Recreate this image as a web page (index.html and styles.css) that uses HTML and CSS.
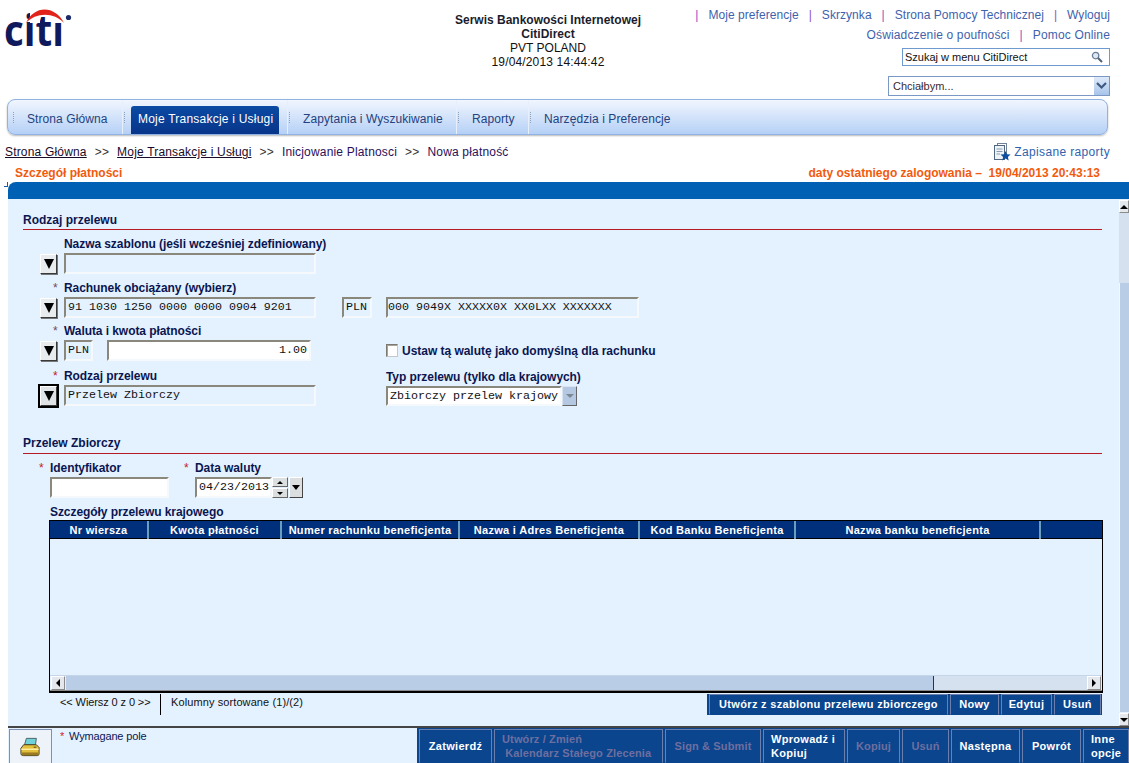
FILE: index.html
```html
<!DOCTYPE html>
<html lang="pl">
<head>
<meta charset="utf-8">
<title>CitiDirect</title>
<link rel="stylesheet" href="styles.css">
</head>
<body>
<header class="top">
  <div class="logo">
    <svg width="72" height="62" viewBox="0 0 72 62" role="img" aria-label="citi">
      <text class="logo-text" x="3" y="46" textLength="60" lengthAdjust="spacingAndGlyphs">citi</text>
      <rect x="29" y="6" width="10" height="17" fill="#fff"/>
      <rect x="53" y="6" width="11" height="17" fill="#fff"/>
      <path d="M25 23 C33 5 54 5 63 23 C53 12 35 12 25 23 Z" fill="#e2231a"/>
      <circle cx="67.5" cy="17.5" r="2.6" fill="#1b2a6b"/>
    </svg>
  </div>
  <div class="title-block">
    <div class="strong">Serwis Bankowości Internetowej</div>
    <div class="strong">CitiDirect</div>
    <div>PVT POLAND</div>
    <div class="stamp">19/04/2013 14:44:42</div>
  </div>
  <div class="utility">
    <div class="links links-first">
      <span class="sep">|</span><a>Moje preferencje</a><span class="sep">|</span><a>Skrzynka</a><span class="sep">|</span><a>Strona Pomocy Technicznej</a><span class="sep">|</span><a>Wyloguj</a>
    </div>
    <div class="links links-second">
      <a>Oświadczenie o poufności</a><span class="sep">|</span><a>Pomoc Online</a>
    </div>
    <div class="search">
      <span>Szukaj w menu CitiDirect</span>
      <svg width="12" height="12" viewBox="0 0 12 12"><circle cx="4.6" cy="4.6" r="3.2" fill="#dfe8f2" stroke="#6b7f96" stroke-width="1.3"/><path d="M7 7 L11 11" stroke="#4f6074" stroke-width="2"/></svg>
    </div>
    <div class="want">
      <span>Chciałbym...</span>
      <span class="want-btn"><svg width="11" height="8" viewBox="0 0 11 8"><path d="M1 1 L5.5 5.5 L10 1" fill="none" stroke="#3f5a80" stroke-width="2.2"/></svg></span>
    </div>
  </div>
</header>

<nav class="nav">
  <div class="nav-item nav-first"><span class="nav-label">Strona Główna</span></div>
  <div class="nav-item nav-current"><span class="nav-label">Moje Transakcje i Usługi</span></div>
  <div class="nav-item"><span class="nav-label">Zapytania i Wyszukiwanie</span></div>
  <div class="nav-item"><span class="nav-label">Raporty</span></div>
  <div class="nav-item nav-last"><span class="nav-label">Narzędzia i Preferencje</span></div>
</nav>

<div class="crumbs">
  <div class="crumb-list">
    <a>Strona Główna</a><span class="gt">&gt;&gt;</span><a>Moje Transakcje i Usługi</a><span class="gt">&gt;&gt;</span><span class="plain">Inicjowanie Platnosci</span><span class="gt">&gt;&gt;</span><span class="plain">Nowa płatność</span>
  </div>
  <div class="saved">
    <svg width="17" height="18" viewBox="0 0 17 18"><rect x="3.5" y="0.5" width="9" height="12" fill="#fff" stroke="#6f8296"/><rect x="0.5" y="2.5" width="10" height="14" fill="#eef3f8" stroke="#52677f"/><path d="M2.5 6H8.5M2.5 8.5H8.5M2.5 11H6" stroke="#8a9bb0"/><path d="M11.5 8 L13 11.2 L16.5 11.6 L13.9 13.9 L14.7 17.4 L11.5 15.6 L8.3 17.4 L9.1 13.9 L6.5 11.6 L10 11.2 Z" fill="#0d4f9e"/></svg>
    <span>Zapisane raporty</span>
  </div>
</div>

<div class="page-title">
  <span>Szczegół płatności</span>
  <span class="last-login">daty ostatniego zalogowania –&nbsp; 19/04/2013 20:43:13</span>
</div>

<div class="blue-bar"></div>

<main class="main">
  <div class="content">
    <h2 class="section section-first">Rodzaj przelewu</h2>

    <div class="row row-a">
      <button class="drop"><i class="tri-down"></i></button>
      <div class="field">
        <div class="label">Nazwa szablonu (jeśli wcześniej zdefiniowany)</div>
        <div class="box w252"></div>
      </div>
    </div>

    <div class="row">
      <button class="drop"><i class="tri-down"></i></button>
      <div class="field">
        <div class="label req-grey">Rachunek obciążany (wybierz)</div>
        <div class="box w252">91 1030 1250 0000 0000 0904 9201</div>
      </div>
      <div class="box w30 gap26">PLN</div>
      <div class="box w253 gap14 tight">000 9049X XXXXX0X XX0LXX XXXXXXX</div>
    </div>

    <div class="row row-tight">
      <button class="drop"><i class="tri-down"></i></button>
      <div class="field">
        <div class="label req-grey">Waluta i kwota płatności</div>
        <div class="amount-line">
          <div class="box w28">PLN</div>
          <div class="box box-white w204 num">1.00</div>
        </div>
      </div>
      <label class="check"><span class="check-box"></span>Ustaw tą walutę jako domyślną dla rachunku</label>
    </div>

    <div class="row row-loose">
      <button class="drop drop-focus"><i class="tri-down"></i></button>
      <div class="field">
        <div class="label req">Rodzaj przelewu</div>
        <div class="box w252">Przelew Zbiorczy</div>
      </div>
      <div class="field gap70">
        <div class="label">Typ przelewu (tylko dla krajowych)</div>
        <div class="select">
          <div class="select-value">Zbiorczy przelew krajowy</div>
          <span class="select-btn"><i class="tri-down tri-grey"></i></span>
        </div>
      </div>
    </div>

    <h2 class="section section-second">Przelew Zbiorczy</h2>

    <div class="row-b">
      <div class="field">
        <div class="label req">Identyfikator</div>
        <div class="box box-white w119"></div>
      </div>
      <div class="field gap26">
        <div class="label req">Data waluty</div>
        <div class="date">
          <div class="box box-white w77 date-value">04/23/2013</div>
          <div class="spin"><span><i class="tri-up tri-small"></i></span><span><i class="tri-down tri-small"></i></span></div>
          <button class="date-drop"><i class="tri-down"></i></button>
        </div>
      </div>
    </div>

    <div class="table-title">Szczegóły przelewu krajowego</div>
    <div class="table">
      <div class="thead">
        <div>Nr wiersza</div>
        <div>Kwota płatności</div>
        <div>Numer rachunku beneficjenta</div>
        <div>Nazwa i Adres Beneficjenta</div>
        <div>Kod Banku Beneficjenta</div>
        <div>Nazwa banku beneficjenta</div>
        <div></div>
      </div>
      <div class="tbody"></div>
      <div class="hscroll">
        <span class="sb-btn"><i class="tri-left"></i></span>
        <span class="hthumb"></span>
        <span class="htrack"></span>
        <span class="sb-btn"><i class="tri-right"></i></span>
      </div>
    </div>

    <div class="status">
      <div class="pager">&lt;&lt; Wiersz 0 z 0 &gt;&gt;</div>
      <div class="sorted">Kolumny sortowane (1)/(2)</div>
      <div class="table-actions">
        <button class="act act-create">Utwórz z szablonu przelewu zbiorczego</button>
        <button class="act act-new">Nowy</button>
        <button class="act act-edit">Edytuj</button>
        <button class="act act-del">Usuń</button>
      </div>
    </div>
  </div>

  <div class="vscroll">
    <span class="vbtn"><i class="tri-up"></i></span>
    <span class="vtrack"></span>
    <span class="vthumb"></span>
    <span class="vbtn"><i class="tri-down"></i></span>
  </div>
</main>

<footer class="footer">
  <div class="print">
    <svg width="20" height="20" viewBox="0 0 22 21">
      <path d="M7 1 L18 1 L17 8 L5 8 Z" fill="#6fd2d8" stroke="#4a5a5a"/>
      <path d="M4 8 L18 8 L21 11 L21 18 Q21 20 19 20 L4 20 Q1 20 1 18 L1 12 Z" fill="#e3bf3e" stroke="#3f3a20"/>
      <path d="M1.5 13 L20.5 13" stroke="#fff3a8" stroke-width="1.5"/>
      <path d="M2 18 L20 18" stroke="#9a7a20" stroke-width="3"/>
      <rect x="15" y="10" width="3" height="1.5" fill="#7a6520"/>
    </svg>
  </div>
  <div class="note">Wymagane pole</div>
  <div class="actions">
    <button class="fbtn">Zatwierdź</button>
    <button class="fbtn fbtn-off fbtn-left">Utwórz / Zmień<br>&nbsp;Kalendarz Stałego Zlecenia</button>
    <button class="fbtn fbtn-off">Sign &amp; Submit</button>
    <button class="fbtn fbtn-left">Wprowadź i<br>Kopiuj</button>
    <button class="fbtn fbtn-off">Kopiuj</button>
    <button class="fbtn fbtn-off">Usuń</button>
    <button class="fbtn">Następna</button>
    <button class="fbtn">Powrót</button>
    <button class="fbtn fbtn-left">Inne<br>opcje</button>
  </div>
</footer>
</body>
</html>
```
FILE: styles.css
```css
* { box-sizing: border-box; }
html, body { margin: 0; padding: 0; }
body {
  width: 1129px;
  height: 763px;
  overflow: hidden;
  background: #fff;
  font: 12px/14px "Liberation Sans", Arial, sans-serif;
  color: #111;
}
button { font-family: inherit; padding: 0; margin: 0; }
a { cursor: pointer; }

/* triangles */
i { display: block; width: 0; height: 0; }
.tri-down { border-left: 5px solid transparent; border-right: 5px solid transparent; border-top: 10px solid #000; }
.tri-grey { border-left-width: 4px; border-right-width: 4px; border-top: 4px solid #7c8794; }
.tri-up { border-left: 4px solid transparent; border-right: 4px solid transparent; border-bottom: 4px solid #000; }
.tri-left { border-top: 4px solid transparent; border-bottom: 4px solid transparent; border-right: 4px solid #000; }
.tri-right { border-top: 4px solid transparent; border-bottom: 4px solid transparent; border-left: 4px solid #000; }
.tri-small { border-left-width: 3px; border-right-width: 3px; }
.tri-small.tri-down { border-top-width: 3px; }
.tri-small.tri-up { border-bottom-width: 3px; }

/* header */
.top {
  height: 99px;
  display: grid;
  grid-template-columns: 345px 406px minmax(0, 1fr);
  padding-right: 19px;
}
.logo { padding: 0 0 0 1px; }
.logo svg { display: block; }
.logo-text { font: 700 43px "Open Sans", sans-serif; fill: #0f1a5c; }
.title-block { padding-top: 13px; text-align: center; color: #111; }
.strong { font-weight: 700; font-size: 12px; color: #1c1c2c; }
.stamp { letter-spacing: .15px; }
.utility { display: flex; flex-direction: column; align-items: flex-end; }
.links { display: flex; color: #3f62ad; white-space: nowrap; }
.links-first { margin-top: 8px; letter-spacing: .05px; }
.links-second { margin-top: 6px; letter-spacing: .15px; }
.sep { color: #8d52c4; margin: 0 10px; }
.search {
  margin-top: 6px;
  width: 208px;
  height: 18px;
  border: 1px solid #6f9ad0;
  display: flex;
  align-items: center;
  justify-content: space-between;
  padding: 0 6px 0 2px;
  font-size: 11px;
  white-space: nowrap;
}
.want {
  margin-top: 10px;
  width: 222px;
  height: 20px;
  border: 1px solid #7b98c4;
  display: flex;
  align-items: center;
  justify-content: space-between;
  padding-left: 4px;
  font-size: 11px;
  color: #3b2a30;
}
.want-btn {
  width: 15px;
  height: 18px;
  background: linear-gradient(#dfeafa, #a8c4ea);
  display: flex;
  align-items: center;
  justify-content: center;
}

/* nav */
.nav {
  margin: 0 21px 0 7px;
  height: 36px;
  display: flex;
  border: 1px solid #8fb3e2;
  border-radius: 8px;
  background: linear-gradient(#f1f6fe, #b5d0f6);
  box-shadow: 0 1px 2px #b9b9b9;
  overflow: hidden;
  color: #24427f;
}
.nav-item {
  display: flex;
  align-items: flex-end;
  padding: 0 16px 0 15px;
  border-right: 1px solid #e6effb;
  position: relative;
  white-space: nowrap;
}
.nav-item::before {
  content: "";
  position: absolute;
  left: 1px;
  top: 12px;
  height: 11px;
  border-left: 1px dotted #8ba3bf;
}
.nav-label { display: block; height: 28px; line-height: 27px; letter-spacing: .08px; }
.nav-first { width: 115px; padding-left: 19px; }
.nav-first::before { left: 5px; }
.nav-current { width: 165px; padding: 0 8px 0 8px; }
.nav-current .nav-label {
  width: 149px;
  padding-left: 7px;
  color: #fff;
  background: linear-gradient(#0c4aa3, #07358a);
  border-radius: 3px 3px 0 0;
  letter-spacing: .22px;
}
.nav-item:nth-child(3) { width: 169px; }
.nav-item:nth-child(4) { width: 72px; }
.nav-last { border-right: 0; }

/* breadcrumb */
.crumbs {
  margin-top: 8px;
  height: 18px;
  padding: 0 19px 0 5px;
  display: flex;
  justify-content: space-between;
  align-items: center;
}
.crumb-list { white-space: nowrap; letter-spacing: .18px; }
.crumb-list a { text-decoration: underline; color: #1a0a2a; }
.gt { margin: 0 8px; color: #333; }
.plain { color: #2a0f5c; }
.saved { display: flex; align-items: center; gap: 3px; color: #2f63ae; letter-spacing: .35px; }
.saved svg { display: block; }

/* title */
.page-title {
  margin-top: 5px;
  height: 15px;
  padding: 0 29px 0 15px;
  display: flex;
  justify-content: space-between;
  font-weight: 700;
  color: #f25a0d;
  white-space: nowrap;
}
.blue-bar {
  position: relative;
  margin: 1px 0 0 8px;
  height: 17px;
  background: #0061b4;
  border-top-left-radius: 8px;
}
.blue-bar::before {
  content: "";
  position: absolute;
  left: -4px;
  top: 0;
  width: 3px;
  height: 4px;
  border-right: 1px solid #1d5aa8;
  border-bottom: 1px solid #1d5aa8;
}

/* main */
.main {
  margin-left: 8px;
  height: 527px;
  background: #e4f1ff;
  display: flex;
}
.content { width: 1111px; padding: 0 17px 0 15px; color: #0b1650; }
.section {
  margin: 0;
  font-size: 12px;
  font-weight: 700;
  line-height: 14px;
  padding-bottom: 2px;
  border-bottom: 1px solid #b51a22;
}
.section-first { padding-top: 14px; }
.section-second { margin-top: 29px; padding-top: 1px; padding-bottom: 3px; }

.row { display: flex; align-items: flex-end; margin: 7px 0 0 17px; }
.row-a { margin-top: 7px; }
.row-tight { margin-top: 6px; }
.row-loose { margin-top: 8px; }
.field { display: flex; flex-direction: column; }
.label {
  position: relative;
  height: 14px;
  margin-bottom: 2px;
  font-weight: 700;
  white-space: nowrap;
  color: #0b1650;
  letter-spacing: -.07px;
}
.req::before, .req-grey::before {
  content: "*";
  position: absolute;
  left: -11px;
  top: 0;
  font-weight: 400;
  color: #c2202a;
}
.req-grey::before { color: #704a60; }
.box {
  height: 21px;
  border-style: solid;
  border-width: 2px;
  border-color: #8a887c #f6f9fc #f6f9fc #8a887c;
  background: #e4f1ff;
  padding: 0 2px;
  font: 11.67px/17px "Liberation Mono", "Courier New", monospace;
  color: #111;
  white-space: nowrap;
  overflow: hidden;
}
.box-white { background: #fff; }
.tight { padding-left: 0; }
.num { text-align: right; padding-right: 2px; }
.w252 { width: 252px; }
.w253 { width: 253px; }
.w30 { width: 30px; }
.w28 { width: 29px; }
.w204 { width: 204px; }
.w119 { width: 119px; }
.w77 { width: 77px; }
.gap14 { margin-left: 14px; }
.gap26 { margin-left: 26px; }
.gap70 { margin-left: 70px; }
.amount-line { display: flex; gap: 14px; }
.drop {
  width: 17px;
  height: 20px;
  margin: 0 7px 0 0;
  display: flex;
  align-items: center;
  justify-content: center;
  background: #e9ecef;
  border: 1px solid;
  border-color: #fff #3a3a3a #3a3a3a #fff;
  box-shadow: 1px 1px 0 #777;
}
.drop-focus { box-shadow: 0 0 0 2px #000; background: #dfe3e6; }
.check {
  display: flex;
  align-items: center;
  gap: 4px;
  height: 21px;
  margin-left: 75px;
  font-weight: 700;
  color: #0b1650;
  white-space: nowrap;
  letter-spacing: -.03px;
}
.check-box {
  width: 12px;
  height: 13px;
  background: #fff;
  border: 1px solid;
  border-color: #7c7a70 #c4c8c8 #c4c8c8 #7c7a70;
  box-shadow: inset 1px 1px 0 #a5a39a;
}
.select { display: flex; height: 20px; }
.select-value {
  width: 176px;
  border: 2px solid;
  border-color: #8a887c #f6f9fc #f6f9fc #8a887c;
  background: #fff;
  padding-left: 2px;
  font: 11.67px/16px "Liberation Mono", monospace;
  color: #111;
  white-space: nowrap;
  overflow: hidden;
}
.select-btn {
  width: 15px;
  display: flex;
  align-items: center;
  justify-content: center;
  background: #b4c8e2;
  border: 1px solid;
  border-color: #d8e4f2 #666 #666 #d8e4f2;
}
.row-b { display: flex; margin: 7px 0 0 27px; }
.date { display: flex; align-items: flex-start; }
.date-value { padding-left: 2px; }
.spin { width: 16px; height: 21px; display: flex; flex-direction: column; gap: 1px; }
.spin span {
  flex: 1;
  display: flex;
  align-items: center;
  justify-content: center;
  background: #dcdfe0;
  border: 1px solid;
  border-color: #fff #666 #666 #fff;
}
.date-drop {
  width: 14px;
  height: 21px;
  margin-left: 1px;
  display: flex;
  align-items: center;
  justify-content: center;
  background: #dcdfe0;
  border: 1px solid;
  border-color: #fff #444 #444 #fff;
}
.date-drop i { border-left-width: 4px; border-right-width: 4px; border-top-width: 5px; }
.table-title { margin: 7px 0 1px 27px; font-weight: 700; height: 14px; line-height: 14px; letter-spacing: -.07px; }
.table {
  margin: 0 -1px 0 26px;
  border: 1px solid #000;
  border-bottom: 2px solid #000;
  box-shadow: 0 -1px 0 #8b8b8b inset;
}
.thead {
  display: grid;
  grid-template-columns: 99px 133px 178px 180px 156px 245px 1fr;
  height: 18px;
  background: #00307c;
  border-bottom: 1px solid #000;
  color: #fff;
  font: 700 11px/18px "Liberation Sans", sans-serif;
  letter-spacing: .3px;
  text-align: center;
}
.thead div { border-right: 2px solid #6b9dbc; white-space: nowrap; }
.thead div:last-child { border-right: 0; }
.tbody { height: 136px; }
.hscroll {
  height: 16px;
  display: flex;
  border-top: 1px solid #c6d6ea;
  padding: 0 1px 1px;
  align-items: stretch;
}
.sb-btn {
  width: 14px;
  display: flex;
  align-items: center;
  justify-content: center;
  background: #e4e8ec;
  border: 1px solid;
  border-color: #fff #8b8b8b #8b8b8b #fff;
}
.hthumb { width: 868px; background: #bacde6; border-right: 1px solid #333; margin-left: 1px; }
.htrack { flex: 1; background: #d5e1ee; }
.status {
  display: flex;
  align-items: stretch;
  height: 21px;
  margin: 1px 0 0 26px;
  color: #111;
}
.pager { width: 112px; padding: 1px 0 0 11px; border-right: 1px solid #000; font-size: 11px; letter-spacing: -.1px; white-space: nowrap; }
.sorted { padding: 1px 0 0 10px; font-size: 11px; letter-spacing: .1px; white-space: nowrap; }
.table-actions {
  margin-left: auto;
  display: flex;
  background: #0a458e;
  padding: 0 1px 0 2px;
  gap: 2px;
}
.act {
  height: 21px;
  border: 1px solid #6c7fac;
  border-bottom-color: #0a458e;
  background: #0a458e;
  color: #fff;
  font: 700 11px/17px "Liberation Sans", sans-serif;
  letter-spacing: .33px;
  white-space: nowrap;
}
.act-create { width: 239px; }
.act-new { width: 49px; }
.act-edit { width: 51px; }
.act-del { width: 47px; }

.vscroll { width: 10px; display: flex; flex-direction: column; }
.vbtn {
  height: 13px;
  margin-top: 1px;
  display: flex;
  align-items: center;
  justify-content: center;
  background: #e4e8ec;
  border: 1px solid;
  border-color: #fff #8b8b8b #8b8b8b #fff;
}
.vbtn i { border-left-width: 4px; border-right-width: 4px; }
.vbtn .tri-down { border-top-width: 4px; }
.vtrack { height: 70px; background: #d5e1ee; }
.vthumb { flex: 1; background: #bacde6; border-left: 1px solid #f4f8fc; }

/* footer */
.footer {
  margin-left: 8px;
  height: 37px;
  border-top: 2px solid #444;
  display: flex;
  background: #e4f1ff;
  overflow: hidden;
}
.print {
  width: 43px;
  padding: 7px 0 0 10px;
  margin-left: 1px;
  margin-top: 1px;
  background: #eef3f9;
  border: 1px solid #7e8fb5;
  border-bottom: 0;
}
.print svg { display: block; }
.note {
  position: relative;
  width: 365px;
  padding: 1px 0 0 17px;
  font-size: 11px;
  letter-spacing: -.15px;
  color: #0b1650;
}
.note::before {
  content: "*";
  position: absolute;
  left: 8px;
  top: 1px;
  color: #d0202a;
}
.actions {
  flex: 1;
  display: grid;
  grid-template-columns: 73px 169px 96px 82px 53px 47px 69px 59px 46px;
  gap: 2px;
  padding: 1px 0 0 2px;
  background: #0a458e;
}
.fbtn {
  height: 34px;
  border: 1px solid #6c7fac;
  border-bottom-color: #0a458e;
  background: #0a458e;
  color: #fff;
  font: 700 11px/14px "Liberation Sans", sans-serif;
  letter-spacing: .3px;
  white-space: nowrap;
}
.fbtn-off { color: #6f6f9f; letter-spacing: .14px; }
.fbtn-left { text-align: left; padding-left: 7px; }
```
